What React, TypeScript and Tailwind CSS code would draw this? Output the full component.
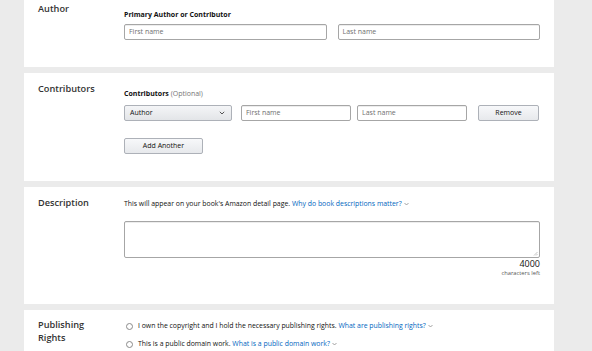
import React from "react";

const font = { fontFamily: '"Open Sans", "Liberation Sans", sans-serif' };

function Card({ title, children, className = "" }: { title: React.ReactNode; children: React.ReactNode; className?: string }) {
  return (
    <section className={`grid grid-cols-[86px_1fr] bg-white px-[14px] ${className}`}>
      <h2 className="text-[9.2px] font-semibold leading-[12.5px] text-[#333]">{title}</h2>
      <div>{children}</div>
    </section>
  );
}

function TextInput({ placeholder, className = "" }: { placeholder: string; className?: string }) {
  return (
    <div
      className={`flex h-[16px] items-center rounded-[2px] border border-[#a6a6a6] bg-white px-[4px] text-[7px] text-[#6f6f6f] shadow-[inset_0_1px_0_rgba(0,0,0,0.07)] ${className}`}
    >
      {placeholder}
    </div>
  );
}

function GrayButton({ children, className = "" }: { children: React.ReactNode; className?: string }) {
  return (
    <div
      className={`flex h-[16px] items-center justify-center rounded-[2px] border border-[#adb1b8] bg-gradient-to-b from-[#f7f8fa] to-[#e7e9ec] text-[7px] text-[#111] ${className}`}
    >
      {children}
    </div>
  );
}

function Chevron() {
  return (
    <svg width="5" height="4" viewBox="0 0 5 4" className="ml-[2px] inline-block align-middle">
      <path d="M0.5 1 L2.5 3 L4.5 1" fill="none" stroke="#8c8c8c" strokeWidth="0.8" />
    </svg>
  );
}

function Radio({ children }: { children: React.ReactNode }) {
  return (
    <div className="flex items-center gap-[5px] text-[6.9px] leading-[10px] text-[#111]">
      <span className="ml-[2px] h-[7px] w-[7px] rounded-full border border-[#8a8a8a] bg-white" />
      <span>{children}</span>
    </div>
  );
}

export default function App() {
  return (
    <div style={font} className="h-[351px] w-[592px] overflow-hidden bg-[#ebebeb]">
      <div className="ml-[24px] mr-[38px] flex flex-col gap-[6px]">
        <Card title="Author" className="-mt-[7px] pt-[10px] pb-[27px]">
          <div className="pt-[7px]">
            <p className="text-[7px] font-bold leading-[10px] text-[#111]">Primary Author or Contributor</p>
            <div className="mt-[4px] grid grid-cols-2 gap-[11px]">
              <TextInput placeholder="First name" />
              <TextInput placeholder="Last name" />
            </div>
          </div>
        </Card>

        <Card title="Contributors" className="pt-[10px] pb-[27px]">
          <div className="pt-[6px]">
            <p className="text-[7px] leading-[10px] text-[#111]">
              <span className="font-bold">Contributors</span> <span className="text-[#767676]">(Optional)</span>
            </p>
            <div className="mt-[6px] flex">
              <div className="flex h-[16px] w-[108px] items-center justify-between rounded-[2px] border border-[#adb1b8] bg-gradient-to-b from-[#f4f5f7] to-[#e3e5e8] pl-[5px] pr-[6px] text-[7px] text-[#111]">
                <span>Author</span>
                <svg width="6" height="4" viewBox="0 0 6 4">
                  <path d="M0.8 0.8 L3 3 L5.2 0.8" fill="none" stroke="#555" strokeWidth="1" />
                </svg>
              </div>
              <TextInput placeholder="First name" className="ml-[9px] w-[110px]" />
              <TextInput placeholder="Last name" className="ml-[6px] w-[110px]" />
              <GrayButton className="ml-[11px] w-[61px]">Remove</GrayButton>
            </div>
            <GrayButton className="mt-[17px] w-[79px]">Add Another</GrayButton>
          </div>
        </Card>

        <Card title="Description" className="pt-[10px] pb-[26px]">
          <div className="pt-[2px]">
            <p className="text-[6.9px] leading-[10px] text-[#111]">
              This will appear on your book's Amazon detail page.{" "}
              <span className="text-[#0066c0]">Why do book descriptions matter?</span>
              <Chevron />
            </p>
            <div className="relative mt-[12px] h-[37px] rounded-[2px] border border-[#a6a6a6] bg-white shadow-[inset_0_1px_0_rgba(0,0,0,0.07)]">
              <svg width="5" height="5" viewBox="0 0 5 5" className="absolute bottom-[1px] right-[1px]">
                <path d="M1 4.5 L4.5 1 M3 4.5 L4.5 3" stroke="#9a9a9a" strokeWidth="0.6" />
              </svg>
            </div>
            <p className="text-right text-[9px] leading-[11px] text-[#111]">4000</p>
            <p className="text-right text-[5.8px] leading-[9px] text-[#555]">characters left</p>
          </div>
        </Card>

        <Card
          title={
            <>
              Publishing
              <br />
              Rights
            </>
          }
          className="pt-[9px] pb-[20px]"
        >
          <div className="flex flex-col gap-[8px] pt-[2px]">
            <Radio>
              I own the copyright and I hold the necessary publishing rights.{" "}
              <span className="text-[#0066c0]">What are publishing rights?</span>
              <Chevron />
            </Radio>
            <Radio>
              This is a public domain work. <span className="text-[#0066c0]">What is a public domain work?</span>
              <Chevron />
            </Radio>
          </div>
        </Card>
      </div>
    </div>
  );
}
